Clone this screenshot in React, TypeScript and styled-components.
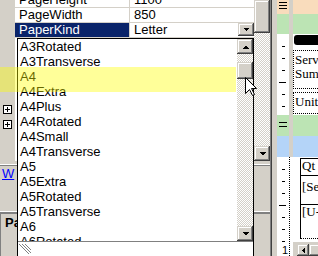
import styled, { createGlobalStyle } from "styled-components";

const GlobalStyle = createGlobalStyle`
  html, body {
    margin: 0;
    padding: 0;
    background: #fff;
  }
`;

const FACE = "#d4d0c8";
const TONES = {
  peach: "#f9dcbc",
  green: "#bce4b4",
  blue: "#b4d4f8",
  white: "#fff",
};
type Tone = keyof typeof TONES;

const checker = `
  background-color: #fff;
  background-image: conic-gradient(${FACE} 25%, #fff 0 50%, ${FACE} 0 75%, #fff 0);
  background-size: 2px 2px;
`;

const raised = `
  background: ${FACE};
  box-shadow: inset -1px -1px #404040, inset 1px 1px ${FACE}, inset -2px -2px #808080, inset 2px 2px #fff;
`;

const Page = styled.div`
  position: relative;
  width: 318px;
  height: 256px;
  overflow: hidden;
  display: flex;
  background: ${FACE};
  font-family: "Liberation Sans Narrow", "Arial Narrow", "Liberation Sans", sans-serif;
  font-size: 13px;
  color: #000;
`;

/* ---------- property grid side ---------- */

const LeftPane = styled.div`
  width: 270px;
  flex-shrink: 0;
  display: flex;
  flex-direction: column;
`;

const Grid = styled.div`
  height: 161px;
  flex-shrink: 0;
  display: flex;
  overflow: hidden;
`;

const Margin = styled.div`
  width: 15px;
  flex-shrink: 0;
  display: flex;
  flex-direction: column;
  align-items: center;
  gap: 6px;
  padding-top: 105px;
  box-sizing: border-box;
  background: ${FACE};
`;

const Expander = styled.div`
  position: relative;
  width: 9px;
  height: 9px;
  box-sizing: border-box;
  border: 1px solid #000;
  background: #fff;

  &::before,
  &::after {
    content: "";
    position: absolute;
    background: #000;
  }
  &::before {
    left: 1px;
    top: 3px;
    width: 5px;
    height: 1px;
  }
  &::after {
    left: 3px;
    top: 1px;
    width: 1px;
    height: 5px;
  }
`;

const Rows = styled.div`
  flex: 1;
  display: flex;
  flex-direction: column;
  margin-top: -7px;
  background: #fff;
`;

const PropRow = styled.div`
  display: flex;
  height: 15px;
  flex-shrink: 0;
  box-sizing: border-box;
  border-bottom: 1px solid ${FACE};
  line-height: 14px;
`;

const PropName = styled.div<{ $selected?: boolean }>`
  width: 115px;
  box-sizing: border-box;
  padding-left: 4px;
  border-right: 1px solid ${FACE};
  background: ${({ $selected }) => ($selected ? "#0a246a" : "#fff")};
  color: ${({ $selected }) => ($selected ? "#fff" : "#000")};
  white-space: nowrap;
`;

const PropValue = styled.div`
  flex: 1;
  display: flex;
  justify-content: space-between;
  padding-left: 4px;
  white-space: nowrap;
`;

const DropButton = styled.div`
  ${raised};
  width: 16px;
  height: 13px;
  display: flex;
  align-items: center;
  justify-content: center;
`;

const GridScroll = styled.div`
  width: 16px;
  flex-shrink: 0;
  display: flex;
  flex-direction: column;
  ${checker};
`;

const Thumb = styled.div<{ $h: number; $top?: number }>`
  ${raised};
  height: ${({ $h }) => $h}px;
  margin-top: ${({ $top }) => $top ?? 0}px;
  flex-shrink: 0;
`;

const Track = styled.div`
  flex: 1;
`;

const ScrollBtn = styled.div`
  ${raised};
  height: 15px;
  flex-shrink: 0;
  display: flex;
  align-items: center;
  justify-content: center;
`;

const Splitter = styled.div<{ $h: number }>`
  height: ${({ $h }) => $h}px;
  flex-shrink: 0;
  background: ${FACE};
  box-shadow: inset 0 -1px #808080, inset 0 -2px #fff;
`;

const Commands = styled.div`
  height: 43px;
  flex-shrink: 0;
  padding: 1px 0 0 2px;
  box-sizing: border-box;
  line-height: 14px;
`;

const CmdLink = styled.span`
  color: #0000ff;
  text-decoration: underline;
`;

const Description = styled.div`
  flex: 1;
  padding: 3px 0 0 5px;
  box-shadow: inset 1px 1px #808080;
  line-height: 14px;
`;

const DescTitle = styled.div`
  font-weight: bold;
  white-space: nowrap;
`;

const Divider = styled.div`
  width: 7px;
  flex-shrink: 0;
  background: ${FACE};
  box-shadow: inset 1px 0 #808080, inset 2px 0 #404040;
`;

/* ---------- report designer side ---------- */

const Designer = styled.div`
  flex: 1;
  display: flex;
  flex-direction: column;
  min-width: 0;
`;

const Band = styled.div<{ $h: number }>`
  height: ${({ $h }) => $h}px;
  flex-shrink: 0;
  display: flex;
`;

const RulerCell = styled.div<{ $tone: Tone }>`
  width: 12px;
  flex-shrink: 0;
  position: relative;
  background: ${({ $tone }) => TONES[$tone]};
`;

const RulerDigit = styled.span`
  position: absolute;
  left: 5px;
  bottom: 0;
  font-family: "Liberation Sans", Arial, sans-serif;
  font-size: 11px;
  line-height: 11px;
`;

const SepCell = styled.div<{ $dotted?: boolean }>`
  width: 4px;
  flex-shrink: 0;
  background: ${({ $dotted }) => ($dotted ? "#fff" : FACE)};
  border-left: ${({ $dotted }) => ($dotted ? "1px dotted #000" : "none")};
  box-sizing: border-box;
`;

const BandBody = styled.div<{ $tone: Tone }>`
  flex: 1;
  min-width: 0;
  overflow: hidden;
  display: flex;
  flex-direction: column;
  background: ${({ $tone }) => TONES[$tone]};
  font-family: "Liberation Serif", "Times New Roman", serif;
  font-size: 13px;
  line-height: 14px;
  white-space: nowrap;
`;

const SelectedBar = styled.div`
  height: 10px;
  margin: 1px 0 0 1px;
  background: #000;
  border-radius: 3px 0 0 3px;
  flex-shrink: 0;
`;

const FieldBox = styled.div<{ $top: number; $h: number }>`
  margin-top: ${({ $top }) => $top}px;
  height: ${({ $h }) => $h}px;
  box-sizing: border-box;
  border: 1px dotted #000;
  border-right: none;
  padding: 2px 0 0 1px;
  flex-shrink: 0;
`;

const Table = styled.div`
  margin: 1px 0 0 7px;
  border-left: 1px solid #000;
  border-top: 1px solid #000;
  border-bottom: 1px dotted #000;
  flex-shrink: 0;
`;

const Cell = styled.div<{ $h: number; $pad?: number; $last?: boolean }>`
  height: ${({ $h }) => $h}px;
  padding: ${({ $pad }) => $pad ?? 0}px 0 0 1px;
  box-sizing: border-box;
  border-bottom: ${({ $last }) => ($last ? "none" : "1px solid #000")};
`;

const Spacer = styled.div`
  flex: 1;
`;

const HScroll = styled.div`
  height: 14px;
  flex-shrink: 0;
  display: flex;
  align-items: flex-end;
  padding-left: 4px;
  background: ${FACE};
`;

const HButton = styled.div<{ $w: number }>`
  ${raised};
  width: ${({ $w }) => $w}px;
  height: 12px;
  flex-shrink: 0;
  display: flex;
  align-items: center;
  justify-content: center;
`;

/* ---------- dropdown list ---------- */

const DropList = styled.div`
  position: absolute;
  left: 17px;
  top: 38px;
  width: 237px;
  bottom: 0;
  box-sizing: border-box;
  border: 1px solid #000;
  border-bottom: none;
  background: #fff;
  display: flex;
  flex-direction: column;
`;

const ListBody = styled.div`
  height: 202px;
  flex-shrink: 0;
  display: flex;
`;

const Items = styled.div`
  flex: 1;
  overflow: hidden;
  padding-left: 2px;
`;

const Item = styled.div`
  height: 15px;
  line-height: 15px;
  white-space: nowrap;
`;

const ListScroll = styled.div`
  width: 16px;
  flex-shrink: 0;
  display: flex;
  flex-direction: column;
  ${checker};
`;

const GripBar = styled.div`
  flex: 1;
  border-top: 1px solid #808080;
  padding: 1px 0 0 1px;
`;

const Highlight = styled.div`
  position: absolute;
  left: 0;
  top: 67px;
  width: 236px;
  height: 25px;
  background: rgba(255, 255, 0, 0.4);
  pointer-events: none;
`;

const CursorMark = styled.svg`
  position: absolute;
  left: 245px;
  top: 77px;
`;

type Dir = "up" | "down" | "left";

const Tri = ({ dir, small }: { dir: Dir; small?: boolean }) => {
  if (dir === "left")
    return (
      <svg width="4" height="7" viewBox="0 0 4 7" shapeRendering="crispEdges">
        <polygon points="4,0 4,7 0.5,3.5" fill="#000" />
      </svg>
    );
  if (small)
    return (
      <svg width="5" height="3" viewBox="0 0 5 3" shapeRendering="crispEdges">
        <polygon points="0,0 5,0 2.5,3" fill="#000" />
      </svg>
    );
  return (
    <svg width="7" height="4" viewBox="0 0 7 4" shapeRendering="crispEdges">
      <polygon
        points={dir === "up" ? "0,4 7,4 3.5,0.5" : "0,0 7,0 3.5,3.5"}
        fill="#000"
      />
    </svg>
  );
};

const RulerTicks = ({ h, count }: { h: number; count: number }) => (
  <svg width="12" height={h} shapeRendering="crispEdges">
    {Array.from({ length: count }, (_, i) => {
      const long = (i + 1) % 4 === 0;
      return (
        <rect
          key={i}
          x={long ? 2 : 5}
          y={12 * (i + 1)}
          width={long ? 7 : 3}
          height="1"
          fill="#000"
        />
      );
    })}
  </svg>
);

const RulerLines = ({ h, ys }: { h: number; ys: number[] }) => (
  <svg width="12" height={h} shapeRendering="crispEdges">
    {ys.map((y) => (
      <rect key={y} x="2" y={y} width="8" height="1" fill="#000" />
    ))}
  </svg>
);

const papers = [
  "A3Rotated",
  "A3Transverse",
  "A4",
  "A4Extra",
  "A4Plus",
  "A4Rotated",
  "A4Small",
  "A4Transverse",
  "A5",
  "A5Extra",
  "A5Rotated",
  "A5Transverse",
  "A6",
  "A6Rotated",
];

export default function App() {
  return (
    <>
      <GlobalStyle />
      <Page>
        <LeftPane>
          <Grid>
            <Margin>
              <Expander />
              <Expander />
            </Margin>
            <Rows>
              <PropRow>
                <PropName>PageHeight</PropName>
                <PropValue>1100</PropValue>
              </PropRow>
              <PropRow>
                <PropName>PageWidth</PropName>
                <PropValue>850</PropValue>
              </PropRow>
              <PropRow>
                <PropName $selected>PaperKind</PropName>
                <PropValue>
                  Letter
                  <DropButton>
                    <Tri dir="down" small />
                  </DropButton>
                </PropValue>
              </PropRow>
            </Rows>
            <GridScroll>
              <Thumb $h={33} />
              <Track />
              <ScrollBtn>
                <Tri dir="down" />
              </ScrollBtn>
            </GridScroll>
          </Grid>
          <Splitter $h={5} />
          <Commands>
            <CmdLink>W</CmdLink>
          </Commands>
          <Splitter $h={4} />
          <Description>
            <DescTitle>PaperKind</DescTitle>
          </Description>
        </LeftPane>

        <Divider />

        <Designer>
          <Band $h={14}>
            <RulerCell $tone="peach">
              <RulerLines h={14} ys={[2, 5, 8]} />
            </RulerCell>
            <SepCell />
            <BandBody $tone="peach" />
          </Band>
          <Band $h={20}>
            <RulerCell $tone="green" />
            <SepCell />
            <BandBody $tone="green" />
          </Band>
          <Band $h={81}>
            <RulerCell $tone="white">
              <RulerTicks h={81} count={6} />
            </RulerCell>
            <SepCell />
            <BandBody $tone="white">
              <SelectedBar />
              <FieldBox $top={5} $h={39}>
                <div>Serv</div>
                <div>Sum</div>
              </FieldBox>
              <FieldBox $top={3} $h={22}>
                <div>Unit</div>
              </FieldBox>
            </BandBody>
          </Band>
          <Band $h={21}>
            <RulerCell $tone="green">
              <RulerLines h={21} ys={[7, 11]} />
            </RulerCell>
            <SepCell />
            <BandBody $tone="green" />
          </Band>
          <Band $h={21}>
            <RulerCell $tone="blue" />
            <SepCell />
            <BandBody $tone="blue" />
          </Band>
          <Band $h={99}>
            <RulerCell $tone="white">
              <RulerTicks h={99} count={7} />
              <RulerDigit>1</RulerDigit>
            </RulerCell>
            <SepCell $dotted />
            <BandBody $tone="white">
              <Table>
                <Cell $h={17}>Qt</Cell>
                <Cell $h={29} $pad={4}>
                  [Se
                </Cell>
                <Cell $h={33} $last>
                  [U-
                </Cell>
              </Table>
              <Spacer />
              <HScroll>
                <HButton $w={12}>
                  <Tri dir="left" />
                </HButton>
                <HButton $w={12} />
              </HScroll>
            </BandBody>
          </Band>
        </Designer>

        <DropList>
          <ListBody>
            <Items>
              {papers.map((p) => (
                <Item key={p}>{p}</Item>
              ))}
            </Items>
            <ListScroll>
              <ScrollBtn>
                <Tri dir="up" />
              </ScrollBtn>
              <Thumb $h={17} $top={8} />
              <Track />
              <ScrollBtn>
                <Tri dir="down" />
              </ScrollBtn>
            </ListScroll>
          </ListBody>
          <GripBar>
            <svg width="12" height="14" shapeRendering="crispEdges">
              {[0, 3, 6].map((o) => (
                <g key={o}>
                  <line x1={o} y1="1" x2={o + 10} y2="11" stroke="#808080" />
                  <line x1={o + 1} y1="1" x2={o + 11} y2="11" stroke="#fff" />
                </g>
              ))}
            </svg>
          </GripBar>
        </DropList>

        <Highlight />

        <CursorMark width="13" height="20" viewBox="0 0 13 20">
          <polygon
            points="0.5,0.5 0.5,16.5 4.5,12.5 7.5,18.5 9.5,17.5 6.5,11.5 11.5,11.5"
            fill="#fff"
            stroke="#000"
            strokeWidth="1"
          />
        </CursorMark>
      </Page>
    </>
  );
}
